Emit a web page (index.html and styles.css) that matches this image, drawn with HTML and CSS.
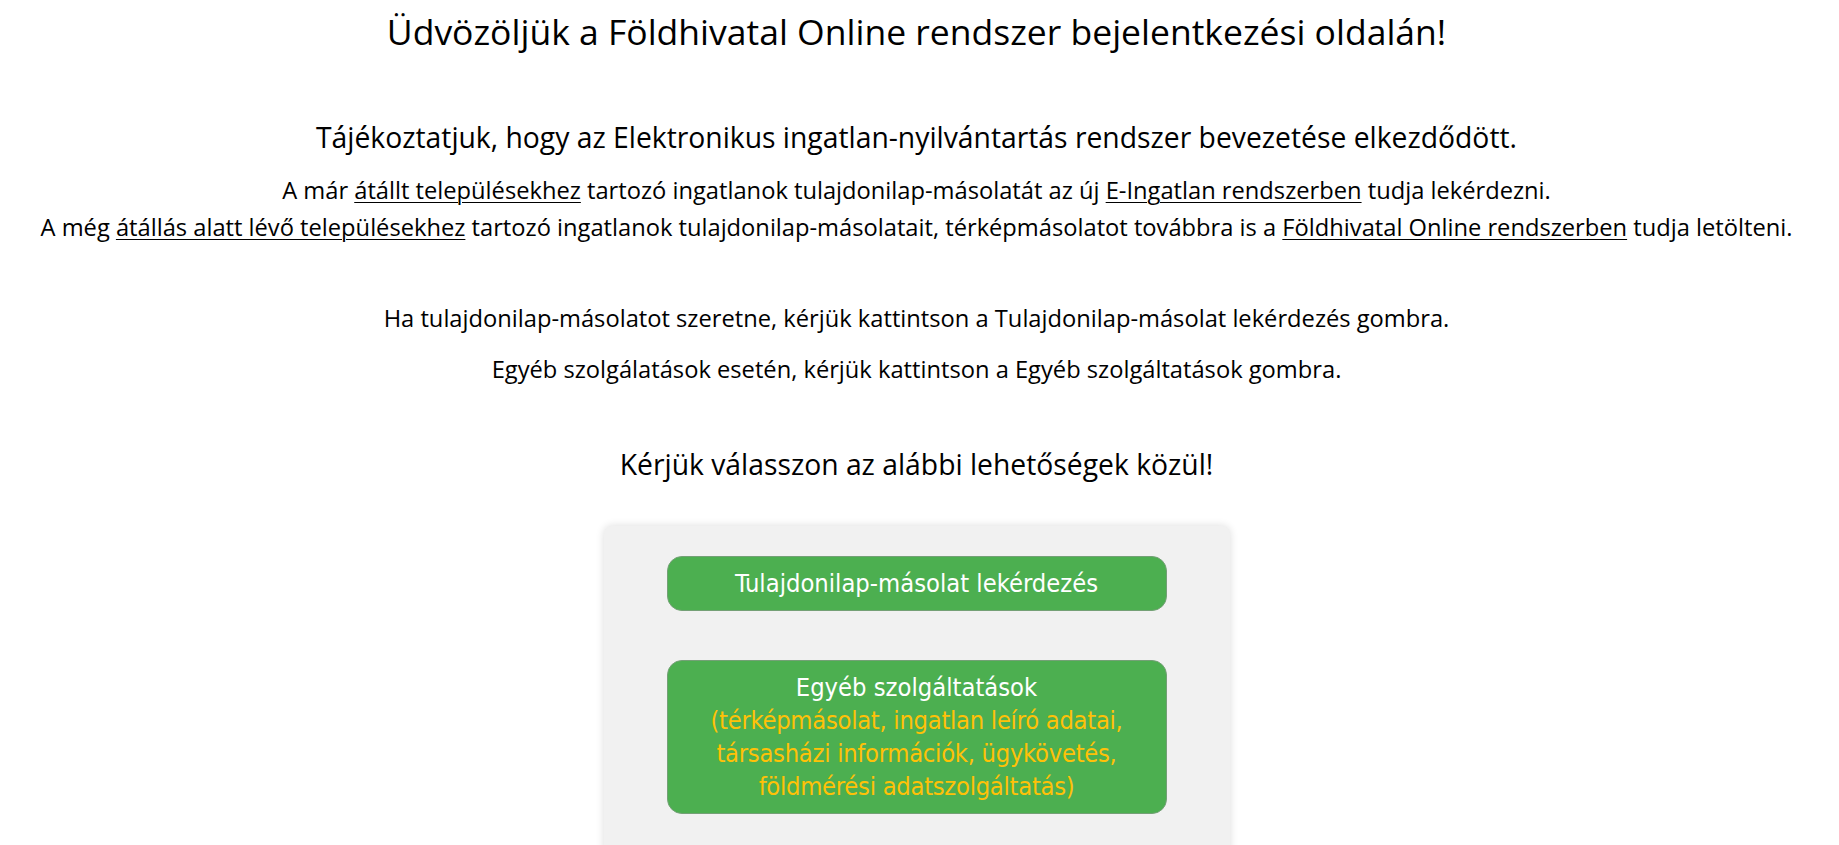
FILE: index.html
```html
<!DOCTYPE html>
<html lang="hu">
<head>
<meta charset="utf-8">
<title>Földhivatal Online</title>
<link rel="stylesheet" href="styles.css">
</head>
<body>
<main class="page">
  <h1 class="title">Üdvözöljük a Földhivatal Online rendszer bejelentkezési oldalán!</h1>
  <h2 class="subtitle notice">Tájékoztatjuk, hogy az Elektronikus ingatlan-nyilvántartás rendszer bevezetése elkezdődött.</h2>
  <div class="info">
    <p class="line">A már <a href="#" class="link">átállt településekhez</a> tartozó ingatlanok tulajdonilap-másolatát az új <a href="#" class="link">E-Ingatlan rendszerben</a> tudja lekérdezni.</p>
    <p class="line">A még <a href="#" class="link">átállás alatt lévő településekhez</a> tartozó ingatlanok tulajdonilap-másolatait, térképmásolatot továbbra is a <a href="#" class="link">Földhivatal Online rendszerben</a> tudja letölteni.</p>
  </div>
  <p class="line hint first">Ha tulajdonilap-másolatot szeretne, kérjük kattintson a Tulajdonilap-másolat lekérdezés gombra.</p>
  <p class="line hint second">Egyéb szolgálatások esetén, kérjük kattintson a Egyéb szolgáltatások gombra.</p>
  <h2 class="subtitle choose">Kérjük válasszon az alábbi lehetőségek közül!</h2>
  <section class="card">
    <button class="btn" type="button">Tulajdonilap-másolat lekérdezés</button>
    <button class="btn" type="button">Egyéb szolgáltatások<br><span class="btn-sub">(térképmásolat, ingatlan leíró adatai,<br>társasházi információk, ügykövetés,<br>földmérési adatszolgáltatás)</span></button>
  </section>
</main>
</body>
</html>
```
FILE: styles.css
```css
html, body {
  margin: 0;
  padding: 0;
  background: #ffffff;
}
body {
  padding-right: 6px;
  font-family: "Open Sans", "Noto Sans", sans-serif;
  color: #000000;
  overflow: hidden;
}
.page {
  display: flex;
  flex-direction: column;
  align-items: center;
  text-align: center;
}
.title {
  margin: 8px 0 0 0;
  font-size: 35.5px;
  line-height: 46px;
  font-weight: 400;
}
.subtitle {
  margin: 0;
  font-size: 28.3px;
  line-height: 36px;
  font-weight: 400;
}
.notice {
  margin-top: 65px;
}
.info {
  margin-top: 17px;
}
.line {
  margin: 0;
  font-size: 23.7px;
  line-height: 37px;
  white-space: nowrap;
}
.link {
  color: inherit;
  text-decoration: underline;
  text-underline-offset: 3px;
  text-decoration-thickness: 1px;
}
.hint.first {
  margin-top: 54px;
}
.hint.second {
  margin-top: 14px;
}
.choose {
  margin-top: 58px;
}
.card {
  margin-top: 44px;
  width: 626px;
  box-sizing: border-box;
  padding: 30px 63px 60px;
  background: #f1f1f1;
  border-radius: 8px;
  box-shadow: 0 0 8px rgba(0, 0, 0, 0.14);
  display: flex;
  flex-direction: column;
  gap: 49px;
}
.btn {
  width: 100%;
  box-sizing: border-box;
  padding: 10px 12px;
  border: 1px solid #74a076;
  border-radius: 15px;
  background: #4caf50;
  color: #ffffff;
  font-family: "DejaVu Sans Condensed", "DejaVu Sans", sans-serif;
  font-stretch: condensed;
  font-size: 25.3px;
  line-height: 33px;
  text-align: center;
  cursor: pointer;
}
.btn-sub {
  color: #ffc107;
  letter-spacing: -0.28px;
}
```
